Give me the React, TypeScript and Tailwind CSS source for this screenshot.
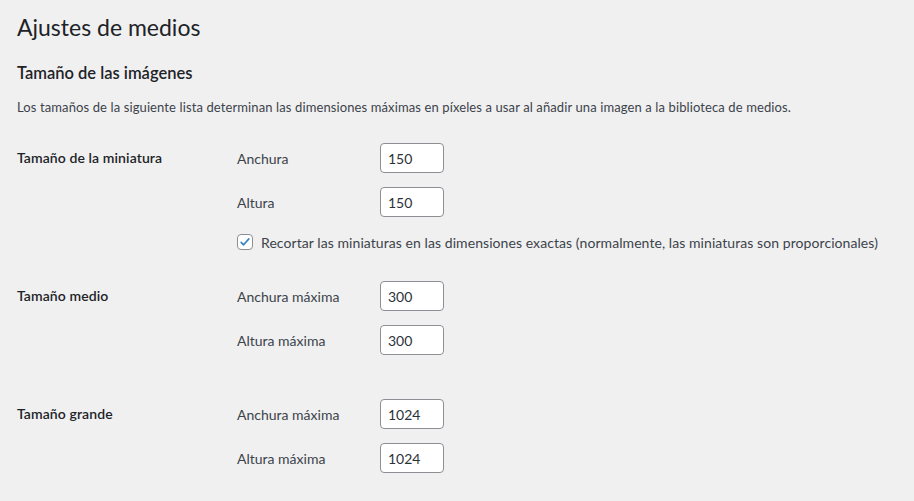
import React from "react";

const font = { fontFamily: 'Lato, "Noto Sans", Arial, sans-serif' };

function NumInput({ value }: { value: string }) {
  return (
    <input
      type="text"
      defaultValue={value}
      className="w-[64px] h-[30px] rounded-[4px] border border-[#8c8f94] bg-white px-[7px] text-[14px] text-[#2c3338] outline-none"
    />
  );
}

function FieldRow({ label, value }: { label: string; value: string }) {
  return (
    <div className="flex items-center h-[30px]">
      <label className="w-[143px] shrink-0 text-[14px] text-[#3c434a]">{label}</label>
      <NumInput value={value} />
    </div>
  );
}

function Section({
  title,
  rows,
  children,
  className,
}: {
  title: string;
  rows: { label: string; value: string }[];
  children?: React.ReactNode;
  className?: string;
}) {
  return (
    <div className={"flex " + (className ?? "")}>
      <div className="w-[220px] shrink-0 h-[28px] flex items-center text-[14px] font-semibold tracking-[0.1px] text-[#1d2327]">
        {title}
      </div>
      <div className="flex flex-col gap-[14px]">
        {rows.map((r) => (
          <FieldRow key={r.label} label={r.label} value={r.value} />
        ))}
        {children}
      </div>
    </div>
  );
}

export default function App() {
  return (
    <div className="w-[914px] h-[501px] overflow-hidden bg-[#f0f0f1] pl-[17px]" style={font}>
      <h1 className="pt-[12px] text-[23px] leading-[30px] font-normal text-[#1d2327]">
        Ajustes de medios
      </h1>
      <h2 className="mt-[20px] text-[16.5px] leading-[22px] font-semibold text-[#1d2327]">
        Tamaño de las imágenes
      </h2>
      <p className="mt-[13px] text-[13px] leading-[20px] tracking-[0.11px] text-[#3c434a] whitespace-nowrap">
        Los tamaños de la siguiente lista determinan las dimensiones máximas en píxeles a usar al añadir una imagen a la biblioteca de medios.
      </p>
      <Section
        className="mt-[26px]"
        title="Tamaño de la miniatura"
        rows={[
          { label: "Anchura", value: "150" },
          { label: "Altura", value: "150" },
        ]}
      >
        <div className="flex items-center h-[16px] mt-[3px]">
          <span className="w-[16px] h-[16px] shrink-0 rounded-[4px] border border-[#8c8f94] bg-white flex items-center justify-center">
            <svg width="14" height="14" viewBox="0 0 20 20">
              <path d="M4.5 10.5 L8 14 L15.5 5.5" fill="none" stroke="#3582c4" strokeWidth="2.4" strokeLinecap="round" strokeLinejoin="round" />
            </svg>
          </span>
          <label className="ml-[8px] text-[14px] tracking-[0.07px] text-[#3c434a] whitespace-nowrap">
            Recortar las miniaturas en las dimensiones exactas (normalmente, las miniaturas son proporcionales)
          </label>
        </div>
      </Section>
      <Section
        className="mt-[31px]"
        title="Tamaño medio"
        rows={[
          { label: "Anchura máxima", value: "300" },
          { label: "Altura máxima", value: "300" },
        ]}
      />
      <Section
        className="mt-[44px]"
        title="Tamaño grande"
        rows={[
          { label: "Anchura máxima", value: "1024" },
          { label: "Altura máxima", value: "1024" },
        ]}
      />
    </div>
  );
}
